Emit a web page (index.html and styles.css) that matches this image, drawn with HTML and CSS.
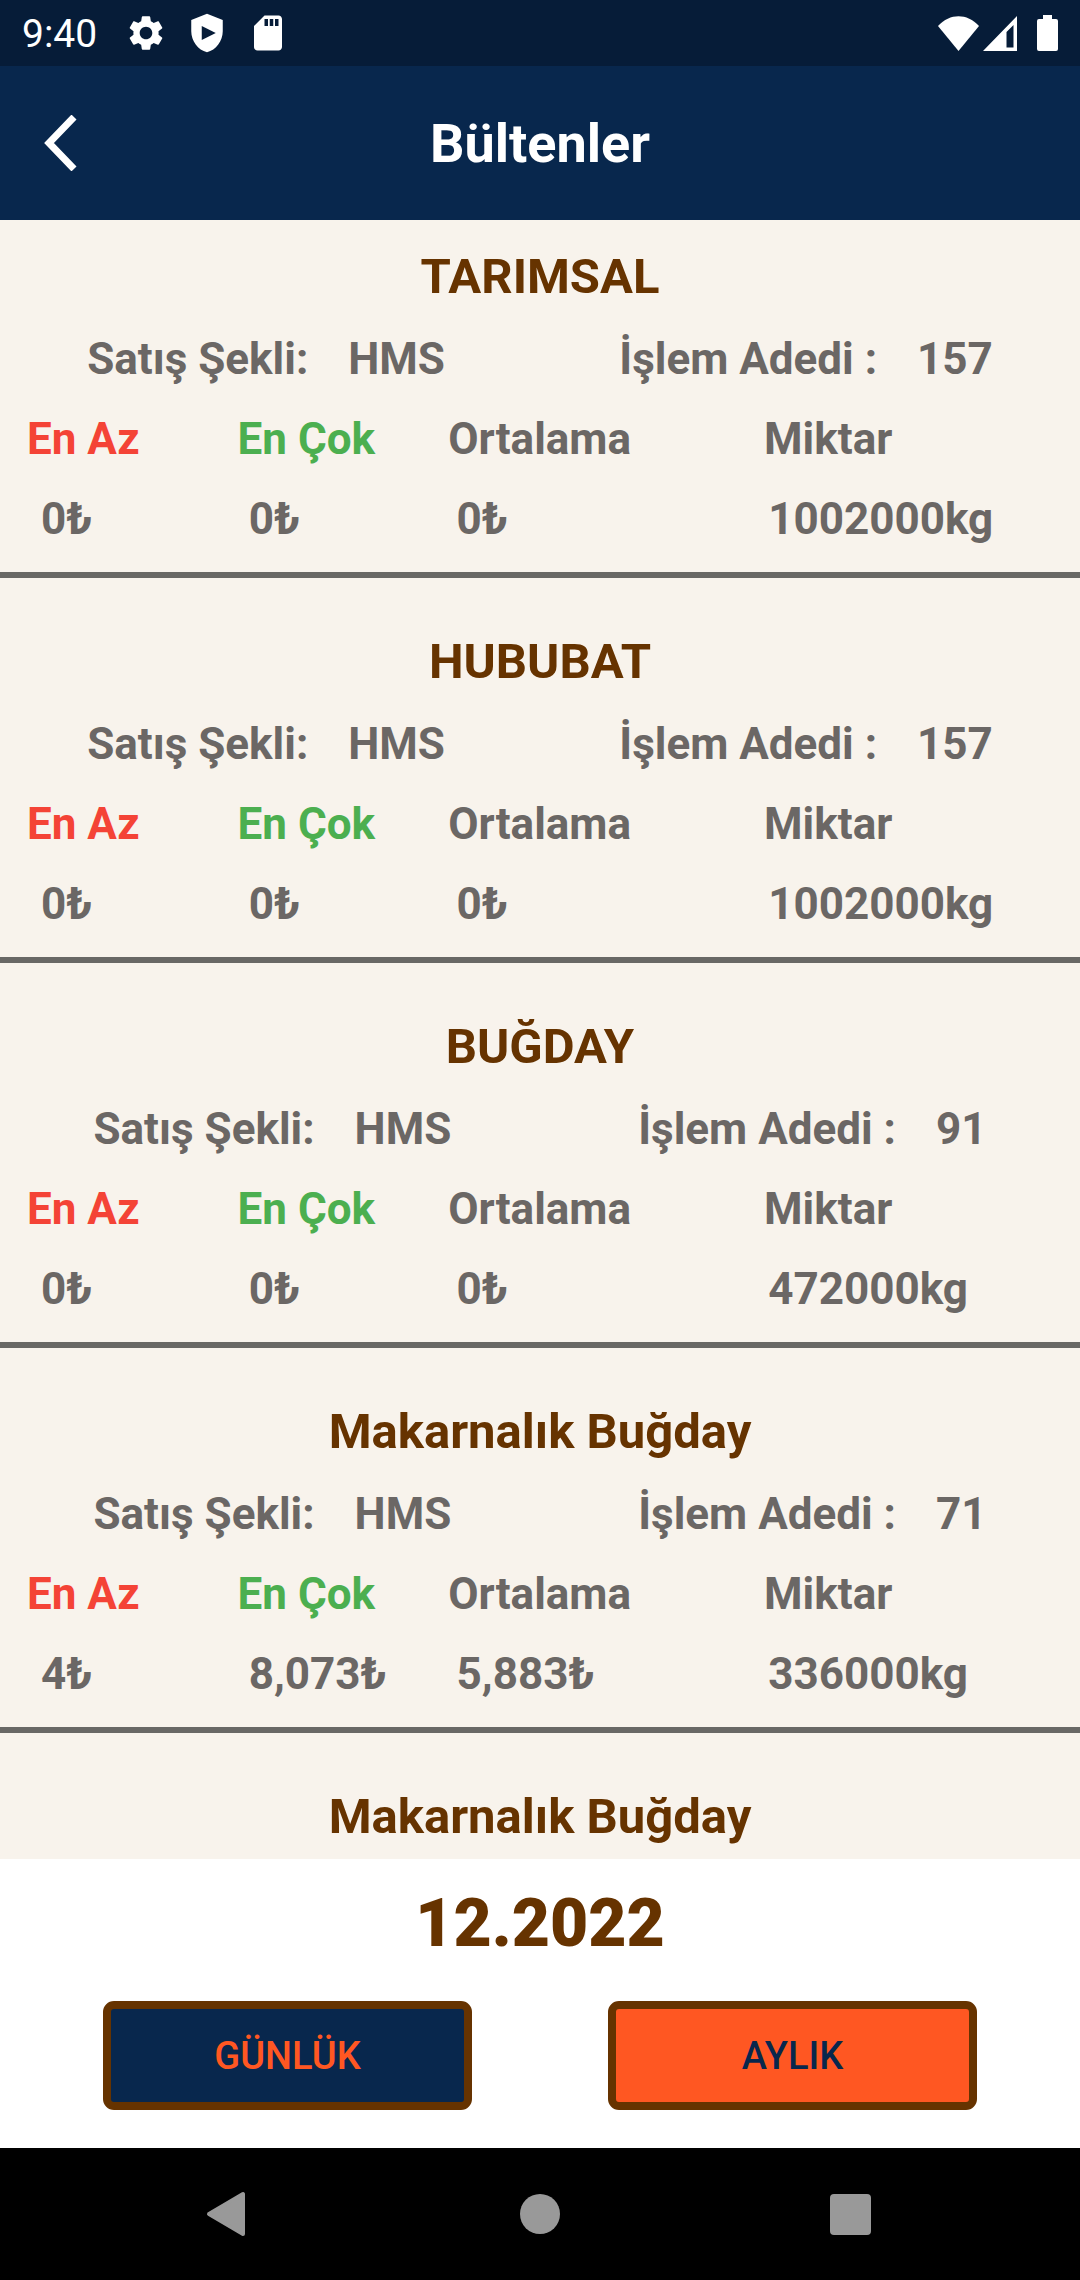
FILE: index.html
```html
<!DOCTYPE html>
<html lang="tr">
<head>
    <meta charset="UTF-8">
    <meta name="viewport" content="width=device-width, initial-scale=1.0">
    <title>Bültenler</title>
    <link rel="stylesheet" href="styles.css">
</head>
<body>
    <div class="status-bar">
        <span class="clock">9:40</span>
        <div class="status-left">
            <svg class="status-icon" viewBox="0 0 24 24"><path d="M19.14 12.94c.04-.3.06-.61.06-.94 0-.32-.02-.64-.07-.94l2.03-1.58c.18-.14.23-.41.12-.61l-1.92-3.32c-.12-.22-.37-.29-.59-.22l-2.39.96c-.5-.38-1.03-.7-1.62-.94l-.36-2.54c-.04-.24-.24-.41-.48-.41h-3.84c-.24 0-.43.17-.47.41l-.36 2.54c-.59.24-1.13.57-1.62.94l-2.39-.96c-.22-.08-.47 0-.59.22L2.74 8.87c-.12.21-.08.47.12.61l2.03 1.58c-.05.3-.09.63-.09.94s.02.64.07.94l-2.03 1.58c-.18.14-.23.41-.12.61l1.92 3.32c.12.22.37.29.59.22l2.39-.96c.5.38 1.03.7 1.62.94l.36 2.54c.05.24.24.41.48.41h3.84c.24 0 .44-.17.47-.41l.36-2.54c.59-.24 1.13-.56 1.62-.94l2.39.96c.22.08.47 0 .59-.22l1.92-3.32c.12-.22.07-.47-.12-.61l-2.01-1.58zM12 15.6c-1.98 0-3.6-1.62-3.6-3.6s1.62-3.6 3.6-3.6 3.6 1.62 3.6 3.6-1.62 3.6-3.6 3.6z"/></svg>
            <svg class="status-icon" viewBox="0 0 24 24"><path fill-rule="evenodd" d="M12 1 3 4.500v6.500c0 5.550 3.840 10.740 9 12 5.160-1.260 9-6.450 9-12V4.500zM9 8l8 4-8 4z"/></svg>
            <svg class="status-icon" viewBox="0 0 24 24"><path fill-rule="evenodd" d="M18 2h-8L4 8v12c0 1.100.9 2 2 2h12c1.100 0 2-.9 2-2V4c0-1.100-.9-2-2-2zM10 4h2v4h-2zM13 4h2v4h-2zM16 4h2v4h-2z"/></svg>
        </div>
        <div class="status-right">
            <svg class="wifi-icon" viewBox="0 0 41 35"><path d="M0 10C12-3 29-3 41 10L20.500 35z"/></svg>
            <svg class="signal-icon" viewBox="0 0 34 35"><path fill-rule="evenodd" d="M0 35 34 0V35zM23.500 16v15.500h7V9z"/></svg>
            <svg class="battery-icon" viewBox="0 0 21 36"><path d="M6 0h9v4h4a2 2 0 0 1 2 2v28a2 2 0 0 1-2 2H2a2 2 0 0 1-2-2V6a2 2 0 0 1 2-2h4z"/></svg>
        </div>
    </div>
    <header class="header">
        <button class="back-button" aria-label="Geri">
            <svg class="back-icon" viewBox="0 0 33 56"><path d="M30 2 5 28l25 26"/></svg>
        </button>
        <h1 class="title">Bültenler</h1>
    </header>
    <main class="bulletin-list">
        <section class="bulletin">
            <h2 class="bulletin-name">TARIMSAL</h2>
            <div class="summary">
                <p class="pair"><span>Satış Şekli:</span><span>HMS</span></p>
                <p class="pair"><span>İşlem Adedi :</span><span>157</span></p>
            </div>
            <table class="prices">
                <thead>
                    <tr><th class="min">En Az</th><th class="max">En Çok</th><th>Ortalama</th><th>Miktar</th></tr>
                </thead>
                <tbody>
                    <tr><td>0₺</td><td>0₺</td><td>0₺</td><td>1002000kg</td></tr>
                </tbody>
            </table>
        </section>
        <section class="bulletin">
            <h2 class="bulletin-name">HUBUBAT</h2>
            <div class="summary">
                <p class="pair"><span>Satış Şekli:</span><span>HMS</span></p>
                <p class="pair"><span>İşlem Adedi :</span><span>157</span></p>
            </div>
            <table class="prices">
                <thead>
                    <tr><th class="min">En Az</th><th class="max">En Çok</th><th>Ortalama</th><th>Miktar</th></tr>
                </thead>
                <tbody>
                    <tr><td>0₺</td><td>0₺</td><td>0₺</td><td>1002000kg</td></tr>
                </tbody>
            </table>
        </section>
        <section class="bulletin">
            <h2 class="bulletin-name">BUĞDAY</h2>
            <div class="summary">
                <p class="pair"><span>Satış Şekli:</span><span>HMS</span></p>
                <p class="pair"><span>İşlem Adedi :</span><span>91</span></p>
            </div>
            <table class="prices">
                <thead>
                    <tr><th class="min">En Az</th><th class="max">En Çok</th><th>Ortalama</th><th>Miktar</th></tr>
                </thead>
                <tbody>
                    <tr><td>0₺</td><td>0₺</td><td>0₺</td><td>472000kg</td></tr>
                </tbody>
            </table>
        </section>
        <section class="bulletin">
            <h2 class="bulletin-name">Makarnalık Buğday</h2>
            <div class="summary">
                <p class="pair"><span>Satış Şekli:</span><span>HMS</span></p>
                <p class="pair"><span>İşlem Adedi :</span><span>71</span></p>
            </div>
            <table class="prices">
                <thead>
                    <tr><th class="min">En Az</th><th class="max">En Çok</th><th>Ortalama</th><th>Miktar</th></tr>
                </thead>
                <tbody>
                    <tr><td>4₺</td><td>8,073₺</td><td>5,883₺</td><td>336000kg</td></tr>
                </tbody>
            </table>
        </section>
        <section>
            <h2 class="bulletin-name">Makarnalık Buğday</h2>
        </section>
    </main>
    <div class="period">
        <p class="period-date">12.2022</p>
        <div class="period-buttons">
            <button class="period-button daily">GÜNLÜK</button>
            <button class="period-button monthly">AYLIK</button>
        </div>
    </div>
    <nav class="nav-bar">
        <button class="nav-button" aria-label="Geri">
            <svg class="nav-icon" viewBox="0 0 48 48"><path d="M38 4v40L4 24z" stroke="#999" stroke-width="4" stroke-linejoin="round"/></svg>
        </button>
        <button class="nav-button" aria-label="Ana ekran">
            <svg class="nav-icon" viewBox="0 0 48 48"><circle cx="24" cy="24" r="20"/></svg>
        </button>
        <button class="nav-button" aria-label="Son uygulamalar">
            <svg class="nav-icon" viewBox="0 0 48 48"><rect x="3" y="4" width="41" height="41" rx="4"/></svg>
        </button>
    </nav>
</body>
</html>
```
FILE: styles.css
```css
* {
    box-sizing: border-box;
}

body {
    display: flex;
    flex-direction: column;
    height: 100vh;
    margin: 0;
    font-family: Roboto, sans-serif;
    background-color: white;
}

h1, h2, p {
    margin: 0;
}

button {
    font-family: inherit;
    cursor: pointer;
}

svg {
    display: block;
    fill: white;
}

.status-bar {
    display: flex;
    align-items: center;
    height: 66px;
    padding: 0 22px;
    background-color: #061c38;
    color: white;
}

.clock {
    padding-top: 2px;
    font-size: 39px;
}

.status-left {
    display: flex;
    gap: 19px;
    margin-left: 28px;
}

.status-icon {
    width: 42px;
    height: 42px;
}

.status-right {
    display: flex;
    align-items: center;
    margin-left: auto;
}

.wifi-icon {
    width: 41px;
    height: 35px;
}

.signal-icon {
    width: 34px;
    height: 35px;
    margin: 0 20px 0 4px;
}

.battery-icon {
    width: 21px;
    height: 36px;
}

.header {
    display: grid;
    grid-template-columns: 120px 1fr 120px;
    align-items: center;
    height: 154px;
    background-color: #08274d;
    color: white;
}

.back-button {
    height: 100%;
    padding: 0 44px;
    border: none;
    background: none;
}

.back-icon {
    width: 33px;
    height: 56px;
    fill: none;
    stroke: white;
    stroke-width: 7px;
}

.title {
    font-size: 54px;
    font-weight: 700;
    text-align: center;
}

.bulletin-list {
    flex: 1;
    min-height: 0;
    overflow-y: auto;
    scrollbar-width: none;
    background-color: #f8f3ec;
}

.bulletin {
    padding-bottom: 13px;
    margin-bottom: 27px;
    border-bottom: 6px solid #696865;
    color: #6b6765;
    font-size: 44px;
    font-weight: 700;
    line-height: 80px;
}

.bulletin-name {
    padding: 16px 0 1px;
    color: #663300;
    font-size: 49px;
    font-weight: 700;
    line-height: 82px;
    text-align: center;
}

.summary {
    display: flex;
    justify-content: space-around;
}

.pair {
    display: flex;
    gap: 40px;
}

.prices,
.prices thead,
.prices tbody {
    display: block;
}

.prices tr {
    display: grid;
    grid-template-columns: 2fr 2fr 3fr 3fr;
}

.prices thead tr {
    padding-left: 27px;
}

.prices tbody tr {
    padding-left: 41px;
}

.prices th,
.prices td {
    min-width: 0;
    padding: 0;
    text-align: left;
}

.min {
    color: #f44336;
}

.max {
    color: #4caf50;
}

.period {
    padding: 25px 103px 38px;
}

.period-date {
    color: #663300;
    font-size: 66px;
    font-weight: 900;
    line-height: 80px;
    text-align: center;
}

.period-buttons {
    display: grid;
    grid-template-columns: 1fr 1fr;
    gap: 136px;
    margin-top: 37px;
}

.period-button {
    height: 109px;
    border: 8px solid #663300;
    border-radius: 11px;
    font-size: 38px;
    font-weight: 500;
}

.daily {
    background-color: #08274d;
    color: #ff5722;
}

.monthly {
    background-color: #ff5722;
    color: #08274d;
}

.nav-bar {
    display: flex;
    justify-content: center;
    height: 132px;
    background-color: black;
}

.nav-button {
    display: flex;
    align-items: center;
    justify-content: center;
    width: 311px;
    border: none;
    background: none;
}

.nav-icon {
    width: 48px;
    height: 48px;
    fill: #999;
}
```
